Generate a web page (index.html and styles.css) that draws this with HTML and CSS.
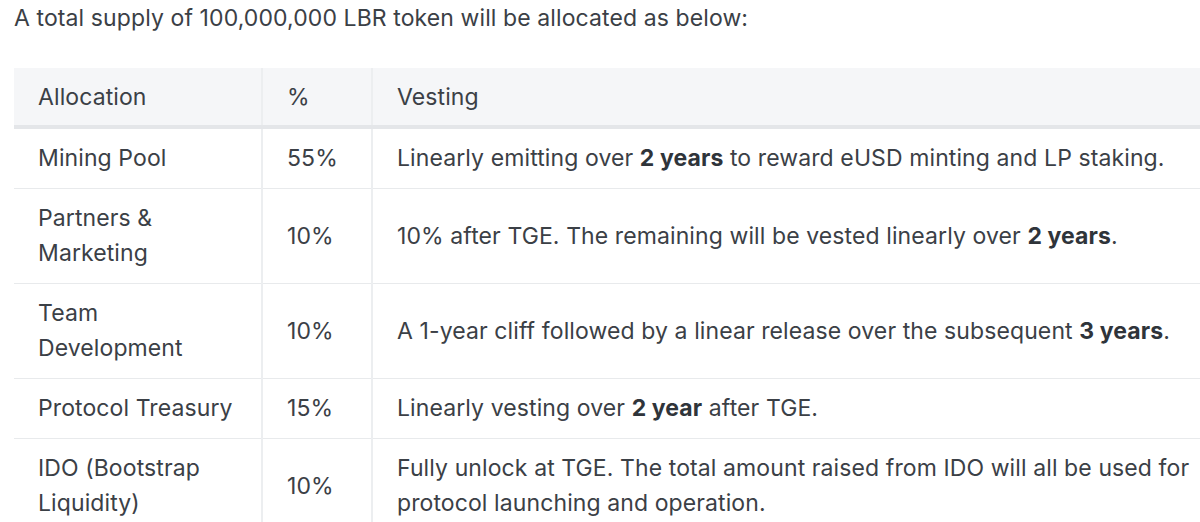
FILE: index.html
```html
<!DOCTYPE html>
<html lang="en">
<head>
<meta charset="utf-8">
<title>LBR Token Allocation</title>
<link rel="stylesheet" href="styles.css">
</head>
<body>
<div class="page">
  <p class="intro">A total supply of 100,000,000 LBR token will be allocated as below:</p>
  <table class="alloc">
    <colgroup>
      <col class="c1">
      <col class="c2">
      <col class="c3">
    </colgroup>
    <thead>
      <tr><th>Allocation</th><th>%</th><th>Vesting</th></tr>
    </thead>
    <tbody>
      <tr><td>Mining Pool</td><td>55%</td><td>Linearly emitting over <strong>2 years</strong> to reward eUSD minting and LP staking.</td></tr>
      <tr><td>Partners &amp; Marketing</td><td>10%</td><td>10% after TGE. The remaining will be vested linearly over <strong>2 years</strong>.</td></tr>
      <tr><td>Team Development</td><td>10%</td><td>A 1-year cliff followed by a linear release over the subsequent <strong>3 years</strong>.</td></tr>
      <tr><td>Protocol Treasury</td><td>15%</td><td>Linearly vesting over <strong>2 year</strong> after TGE.</td></tr>
      <tr><td>IDO (Bootstrap Liquidity)</td><td>10%</td><td>Fully unlock at TGE. The total amount raised from IDO will all be used for protocol launching and operation.</td></tr>
    </tbody>
  </table>
</div>
</body>
</html>
```

FILE: styles.css
```css
html, body {
  margin: 0;
  padding: 0;
  background: #ffffff;
  overflow: hidden;
}
.page {
  width: 1240px;
  padding: 0 0 0 14px;
  font-family: Inter, "Noto Sans", sans-serif;
  font-size: 23px;
  letter-spacing: 0.1px;
  color: #3b4046;
}
.intro {
  margin: 0;
  padding-top: 2px;
  line-height: 32px;
  height: 66px;
}
.alloc {
  border-collapse: collapse;
  width: 1210px;
  table-layout: fixed;
}
.c1 { width: 248px; }
.c2 { width: 110px; }
.alloc th,
.alloc td {
  text-align: left;
  font-weight: 400;
  line-height: 35px;
  padding: 12px 24px;
  vertical-align: middle;
  border-left: 2px solid #eceef0;
  border-bottom: 1px solid #e8eaec;
}
.alloc th:first-child,
.alloc td:first-child {
  border-left: none;
}
.alloc thead th {
  background: #f5f6f8;
  padding: 12px 24px 10px;
  border-bottom: 4px solid #e4e6e9;
}
.alloc strong {
  font-weight: 700;
  color: #2f343a;
}
```
